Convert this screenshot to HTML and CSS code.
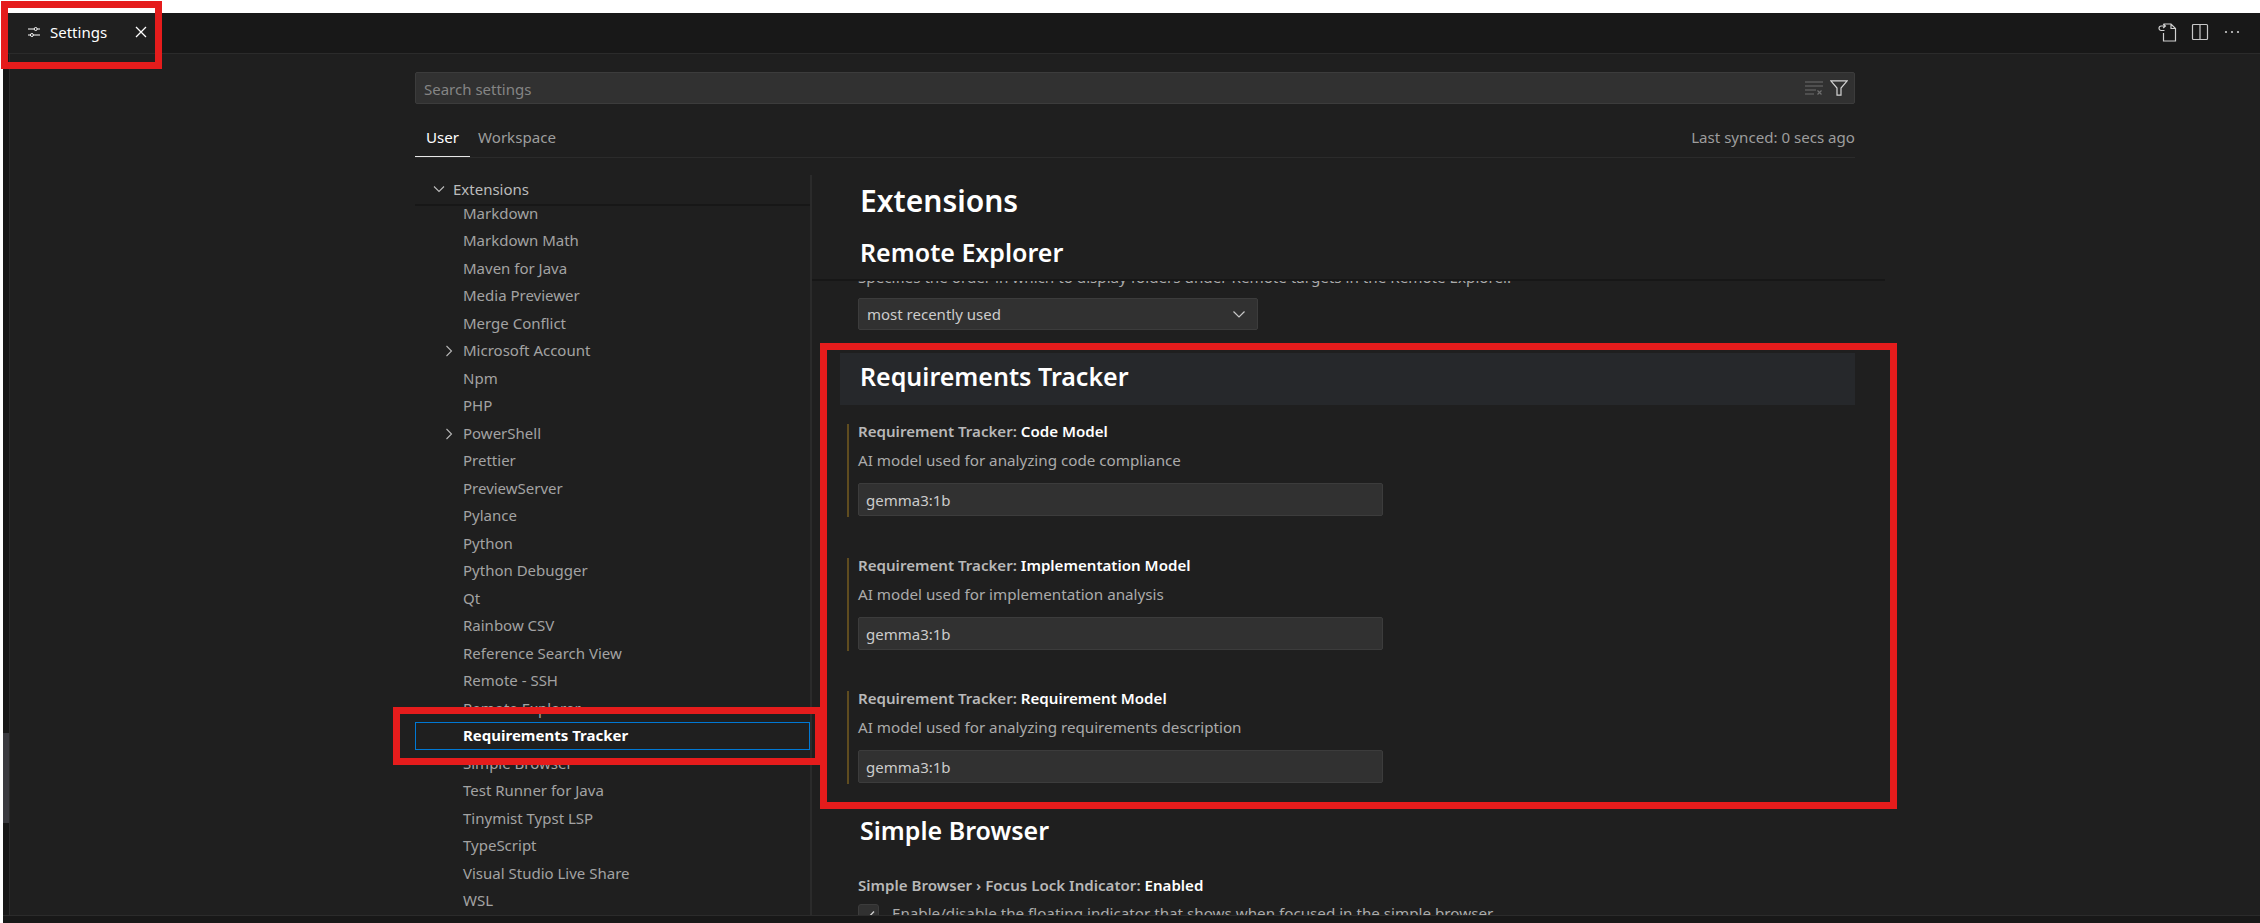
FILE: index.html
```html
<!DOCTYPE html>
<html lang="en">
<head>
<meta charset="utf-8">
<title>Settings</title>
<link rel="stylesheet" href="styles.css">
</head>
<body>
<div class="app">
  <div class="tabbar">
    <div class="editor-tab">
      <svg class="ic-tab" viewBox="0 0 14 12" width="14" height="12"><path d="M1 3h6.200M10.200 3H13M1 9h2.400M6.400 9H13" fill="none" stroke="#fff" stroke-width="1"/><circle cx="8.700" cy="3" r="1.500" fill="none" stroke="#fff"/><circle cx="4.900" cy="9" r="1.500" fill="none" stroke="#fff"/></svg>
      <span class="tab-label">Settings</span>
      <svg class="ic-close" viewBox="0 0 12 12" width="12" height="12"><path d="M1 1l10 10M11 1L1 11" stroke="#fff" stroke-width="1.300" fill="none"/></svg>
    </div>
    <div class="actions">
      <svg viewBox="0 0 20 20" width="20" height="20"><path d="M7 5.500V2h7l4.500 4.500V19H6.500V11M14 2v4.500h4.500M7.500 8.500H4.200C3 8.500 2 7.600 2 6.300S3 4 4.200 4h4M6.200 2l2.200 2-2.200 2" fill="none" stroke="#d0d0d0" stroke-width="1.200"/></svg>
      <svg viewBox="0 0 18 18" width="18" height="18"><path d="M2.500 1.500h13a1 1 0 0 1 1 1v13a1 1 0 0 1-1 1h-13a1 1 0 0 1-1-1v-13a1 1 0 0 1 1-1zM9 1.500v15" fill="none" stroke="#c8c8c8" stroke-width="1.200"/></svg>
      <svg viewBox="0 0 18 18" width="18" height="18"><circle cx="3" cy="9" r="1.100" fill="#ccc"/><circle cx="9" cy="9" r="1.100" fill="#ccc"/><circle cx="15" cy="9" r="1.100" fill="#ccc"/></svg>
    </div>
  </div>

  <div class="workbench">
    <div class="rail"><div class="rail-thumb"></div></div>
    <div class="editor">
      <div class="settings">
        <div class="search">
          <span class="search-text">Search settings</span>
          <svg class="ic-clear" viewBox="0 0 18 14" width="18" height="14"><path d="M0 1h18M0 5h18M0 9h11M0 13h9" stroke="#6e6e6e" stroke-width="1.200" fill="none"/><path d="M12.500 9.500l4 4M16.500 9.500l-4 4" stroke="#6e6e6e" stroke-width="1.200" fill="none"/></svg>
          <svg class="ic-filter" viewBox="0 0 18 16" width="18" height="16"><path d="M.8.8h16.400L11 8v7.200H7V8z" fill="none" stroke="#d4d4d4" stroke-width="1.200"/></svg>
        </div>
        <div class="tabs">
          <div class="tab tab-active">User</div>
          <div class="tab">Workspace</div>
          <div class="synced">Last synced: 0 secs ago</div>
        </div>
      </div>

      <div class="body">
        <div class="sidebar">
          <div class="tree-head">
            <svg class="chev" viewBox="0 0 12 12" width="12" height="12"><path d="M1 3.500l5 5 5-5" fill="none" stroke="#bdbdbd" stroke-width="1.100"/></svg>
            <span>Extensions</span>
          </div>
          <ul class="tree">
            <li class="row">Markdown</li>
            <li class="row">Markdown Math</li>
            <li class="row">Maven for Java</li>
            <li class="row">Media Previewer</li>
            <li class="row">Merge Conflict</li>
            <li class="row row-parent"><svg class="chev" viewBox="0 0 12 12" width="12" height="12"><path d="M3.500 1l5 5-5 5" fill="none" stroke="#b5b5b5" stroke-width="1.100"/></svg><span>Microsoft Account</span></li>
            <li class="row">Npm</li>
            <li class="row">PHP</li>
            <li class="row row-parent"><svg class="chev" viewBox="0 0 12 12" width="12" height="12"><path d="M3.500 1l5 5-5 5" fill="none" stroke="#b5b5b5" stroke-width="1.100"/></svg><span>PowerShell</span></li>
            <li class="row">Prettier</li>
            <li class="row">PreviewServer</li>
            <li class="row">Pylance</li>
            <li class="row">Python</li>
            <li class="row">Python Debugger</li>
            <li class="row">Qt</li>
            <li class="row">Rainbow CSV</li>
            <li class="row">Reference Search View</li>
            <li class="row">Remote - SSH</li>
            <li class="row">Remote Explorer</li>
            <li class="row row-focus">Requirements Tracker</li>
            <li class="row">Simple Browser</li>
            <li class="row">Test Runner for Java</li>
            <li class="row">Tinymist Typst LSP</li>
            <li class="row">TypeScript</li>
            <li class="row">Visual Studio Live Share</li>
            <li class="row">WSL</li>
          </ul>
        </div>

        <div class="content">
          <div class="sticky">
            <h1 class="h-top">Extensions</h1>
            <h2 class="h-section">Remote Explorer</h2>
          </div>
          <p class="desc desc-clipped">Specifies the order in which to display folders under Remote targets in the Remote Explorer.</p>
          <div class="select"><span>most recently used</span><svg viewBox="0 0 14 14" width="14" height="14"><path d="M1.500 4.500L7 10l5.500-5.500" fill="none" stroke="#c8c8c8" stroke-width="1.200"/></svg></div>

          <h2 class="h-section h-highlight">Requirements Tracker</h2>

          <section class="setting">
            <div class="s-title">Requirement Tracker: <b>Code Model</b></div>
            <p class="desc">AI model used for analyzing code compliance</p>
            <div class="input">gemma3:1b</div>
          </section>
          <section class="setting setting-next">
            <div class="s-title">Requirement Tracker: <b>Implementation Model</b></div>
            <p class="desc">AI model used for implementation analysis</p>
            <div class="input">gemma3:1b</div>
          </section>
          <section class="setting setting-next">
            <div class="s-title">Requirement Tracker: <b>Requirement Model</b></div>
            <p class="desc">AI model used for analyzing requirements description</p>
            <div class="input">gemma3:1b</div>
          </section>

          <h2 class="h-section h-simple">Simple Browser</h2>
          <div class="s-title s-plain">Simple Browser › Focus Lock Indicator: <b>Enabled</b></div>
          <div class="check-row">
            <span class="checkbox"><svg viewBox="0 0 16 16" width="16" height="16"><path d="M3 8.500l3.200 3.200L13 4.500" fill="none" stroke="#ccc" stroke-width="1.400"/></svg></span>
            <span class="desc">Enable/disable the floating indicator that shows when focused in the simple browser.</span>
          </div>
        </div>
      </div>
    </div>
  </div>

  <div class="statusbar"></div>
</div>

<div class="mark mark-tab"></div>
<div class="mark mark-row"></div>
<div class="mark mark-group"></div>
</body>
</html>
```

FILE: styles.css
```css
* { box-sizing: border-box; }
html, body { margin: 0; padding: 0; }
body {
  width: 2260px;
  height: 923px;
  overflow: hidden;
  background: #fff;
  position: relative;
  font-family: "Noto Sans", "Open Sans", sans-serif;
  font-size: 15px;
  color: #ccc;
}
.app {
  height: 923px;
  padding: 13px 0 0 3px;
  display: flex;
  flex-direction: column;
}

/* tab strip */
.tabbar {
  flex: none;
  height: 41px;
  background: #181818;
  border-bottom: 1px solid #2b2b2b;
  display: flex;
  align-items: center;
  justify-content: space-between;
}
.editor-tab {
  display: flex;
  align-items: center;
  padding: 0 0 2px 24px;
  height: 40px;
  width: 152px;
  background: #1f1f1f;
  color: #fff;
}
.ic-tab { flex: none; }
.tab-label { margin-left: 9px; width: 85px; }
.ic-close { flex: none; }
.actions {
  display: flex;
  align-items: center;
  gap: 14px;
  padding: 0 19px 2px 0;
}

/* workbench */
.workbench { flex: 1; min-height: 0; display: flex; overflow: hidden; }
.rail {
  flex: none;
  width: 7px;
  background: #181818;
  border-right: 1px solid #2b2b2b;
}
.rail-thumb { margin-top: 679px; height: 90px; background: #3a3a3f; }
.editor { flex: 1; background: #1f1f1f; padding-left: 405px; overflow: hidden; }

.settings { width: 1440px; padding-top: 18px; }
.search {
  height: 32px;
  background: #313131;
  border: 1px solid #3c3c3c;
  border-radius: 2px;
  display: flex;
  align-items: center;
  padding: 0 6px 0 8px;
  color: #858585;
}
.search-text { flex: 1; padding-top: 1px; }
.ic-clear { margin-right: 7px; }
.tabs {
  display: flex;
  align-items: flex-start;
  margin-top: 20px;
  border-bottom: 1px solid #2b2b2b;
  font-size: 15.100px;
}
.tab {
  height: 33px;
  line-height: 26px;
  padding: 0 11px;
  color: #9d9d9d;
  border-bottom: 1px solid transparent;
}
.tab-active { color: #fff; border-bottom-color: #e7e7e7; margin-right: -3px; }
.synced { margin-left: auto; line-height: 26px; color: #9d9d9d; }

/* body */
.body { display: flex; align-items: flex-start; height: 760px; padding-top: 17px; width: 1470px; }
.sidebar { flex: none; width: 395px; height: 740px; overflow: hidden; }
.tree-head {
  position: relative;
  z-index: 1;
  height: 31px;
  padding: 0 0 2px 18px;
  display: flex;
  align-items: center;
  gap: 8px;
  background: #1f1f1f;
  border-bottom: 2px solid #171717;
  color: #bbb;
}
.chev { flex: none; }
.tree { list-style: none; margin: -6.250px 0 0; padding: 0; }
.row {
  height: 27.500px;
  line-height: 27.500px;
  padding-left: 48px;
  color: #a3a3a3;
  white-space: nowrap;
}
.row-parent { padding-left: 28px; display: flex; align-items: center; gap: 8px; }
.row-focus {
  color: #fff;
  font-weight: 700;
  outline: 1px solid #0078d4;
  outline-offset: -1px;
}

.content {
  flex: none;
  width: 1075px;
  height: 740px;
  overflow: hidden;
  border-left: 2px solid #2b2b2b;
}
.sticky {
  position: relative;
  z-index: 1;
  width: 1073px;
  height: 106px;
  padding: 8px 0 0 48px;
  background: #1f1f1f;
  border-bottom: 2px solid #171717;
}
.h-top, .h-section {
  margin: 0;
  color: #fff;
  font-weight: 600;
  line-height: 36px;
  white-space: nowrap;
}
.h-top { font-size: 30px; }
.h-section { font-size: 25px; margin-top: 15px; }
.h-highlight {
  width: 1015px;
  height: 52px;
  margin: 23px 0 0 28px;
  padding: 5px 0 0 20px;
  background: #26282b;
}
.h-simple { margin: 28px 0 0 48px; }
.desc { margin: 0; line-height: 22px; color: #ababab; white-space: nowrap; font-size: 15.200px; }
.desc-clipped { margin: -15px 0 0 46px; }
.select {
  width: 400px;
  height: 32px;
  margin: 10px 0 0 46px;
  padding: 0 11px 0 8px;
  display: flex;
  align-items: center;
  justify-content: space-between;
  background: #313131;
  border: 1px solid #3c3c3c;
  border-radius: 2px;
  color: #ccc;
}
.setting {
  margin: 19px 0 0 35px;
  padding-left: 9px;
  height: 93px;
  border-left: 2px solid #5f4c1f;
}
.setting-next { margin-top: 40.500px; }
.s-title { line-height: 15px; font-weight: 600; color: #b8b8b8; white-space: nowrap; font-size: 15.100px; }
.s-title b { font-weight: 600; color: #fff; }
.s-plain { margin: 30px 0 0 46px; }
.setting .desc { margin-top: 10px; }
.input {
  width: 525px;
  height: 33px;
  margin-top: 12px;
  padding: 0 7px;
  line-height: 33px;
  background: #313131;
  border: 1px solid #3c3c3c;
  border-radius: 2px;
  color: #ccc;
}
.check-row { display: flex; align-items: flex-start; gap: 13px; margin: 11px 0 0 46px; }
.checkbox {
  flex: none;
  width: 21px;
  height: 21px;
  display: flex;
  align-items: center;
  justify-content: center;
  background: #313131;
  border: 1px solid #3c3c3c;
  border-radius: 3px;
}
.check-row .desc { line-height: 18px; }

.statusbar { flex: none; height: 8px; background: #181818; border-top: 1px solid #2b2b2b; }

/* red review annotations painted over the screenshot */
.mark { position: absolute; border: 7px solid #e51c1c; }
.mark-tab { left: 1px; top: 1px; width: 161px; height: 68px; }
.mark-row { left: 393px; top: 707px; width: 429px; height: 58px; }
.mark-group { left: 820px; top: 343px; width: 1077px; height: 466px; }
```
